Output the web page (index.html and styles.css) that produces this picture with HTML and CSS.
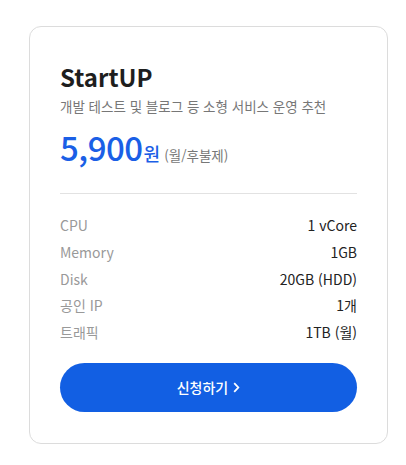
FILE: index.html
```
<!DOCTYPE html>
<html lang="ko">
<head>
<meta charset="utf-8">
<link rel="stylesheet" href="styles.css">
</head>
<body>
<div class="card">
  <h1 class="title">StartUP</h1>
  <p class="desc">개발 테스트 및 블로그 등 소형 서비스 운영 추천</p>
  <div class="price">
    <span class="amount">5,900</span><span class="won">원</span><span class="period">(월/후불제)</span>
  </div>
  <hr class="divider">
  <ul class="specs">
    <li><span class="label">CPU</span><span class="value">1 vCore</span></li>
    <li><span class="label">Memory</span><span class="value">1GB</span></li>
    <li><span class="label">Disk</span><span class="value">20GB (HDD)</span></li>
    <li><span class="label">공인 IP</span><span class="value">1개</span></li>
    <li><span class="label">트래픽</span><span class="value">1TB (월)</span></li>
  </ul>
  <button class="apply">신청하기<svg class="chev" width="7" height="11" viewBox="0 0 7 11"><path d="M1.2 1.2 L5.3 5.5 L1.2 9.8" fill="none" stroke="#fff" stroke-width="1.8"/></svg></button>
</div>
</body>
</html>
```
FILE: styles.css
```
* { box-sizing: border-box; }
html, body { margin: 0; padding: 0; background: #fff; }
body {
  padding: 26px 0 0 29px;
  font-family: "Noto Sans CJK KR", "Noto Sans", sans-serif;
}
.card {
  width: 359px;
  height: 418px;
  border: 1px solid #dcdcdc;
  border-radius: 12px;
  padding: 34px 30px 0 30px;
}
.title {
  margin: 0;
  font-size: 24px;
  font-weight: 700;
  line-height: 32px;
  color: #1e1e1e;
}
.desc {
  margin: 4px 0 0 0;
  font-size: 13.5px;
  line-height: 18px;
  color: #777;
}
.price {
  margin-top: 12px;
  display: flex;
  align-items: baseline;
  line-height: 40px;
}
.amount {
  font-size: 33px;
  font-weight: 500;
  color: #1b5fe6;
  letter-spacing: -0.5px;
}
.won {
  font-size: 18px;
  font-weight: 500;
  color: #1b5fe6;
  margin-left: 1px;
}
.period {
  font-size: 13.5px;
  color: #777;
  margin-left: 4px;
}
.divider {
  margin: 18px 0 0 0;
  border: 0;
  border-top: 1px solid #e2e2e2;
}
.specs {
  list-style: none;
  margin: 18px 0 0 0;
  padding: 0;
}
.specs li {
  display: flex;
  justify-content: space-between;
  font-size: 14px;
  line-height: 26.75px;
}
.label { color: #999; }
.value { color: #222; }
.apply {
  margin-top: 17px;
  width: 100%;
  height: 49px;
  border: 0;
  border-radius: 25px;
  background: #125fe3;
  color: #fff;
  font-family: inherit;
  font-size: 14px;
  font-weight: 500;
  display: flex;
  align-items: center;
  justify-content: center;
  gap: 5px;
}
.chev { margin-top: 1px; }
```
